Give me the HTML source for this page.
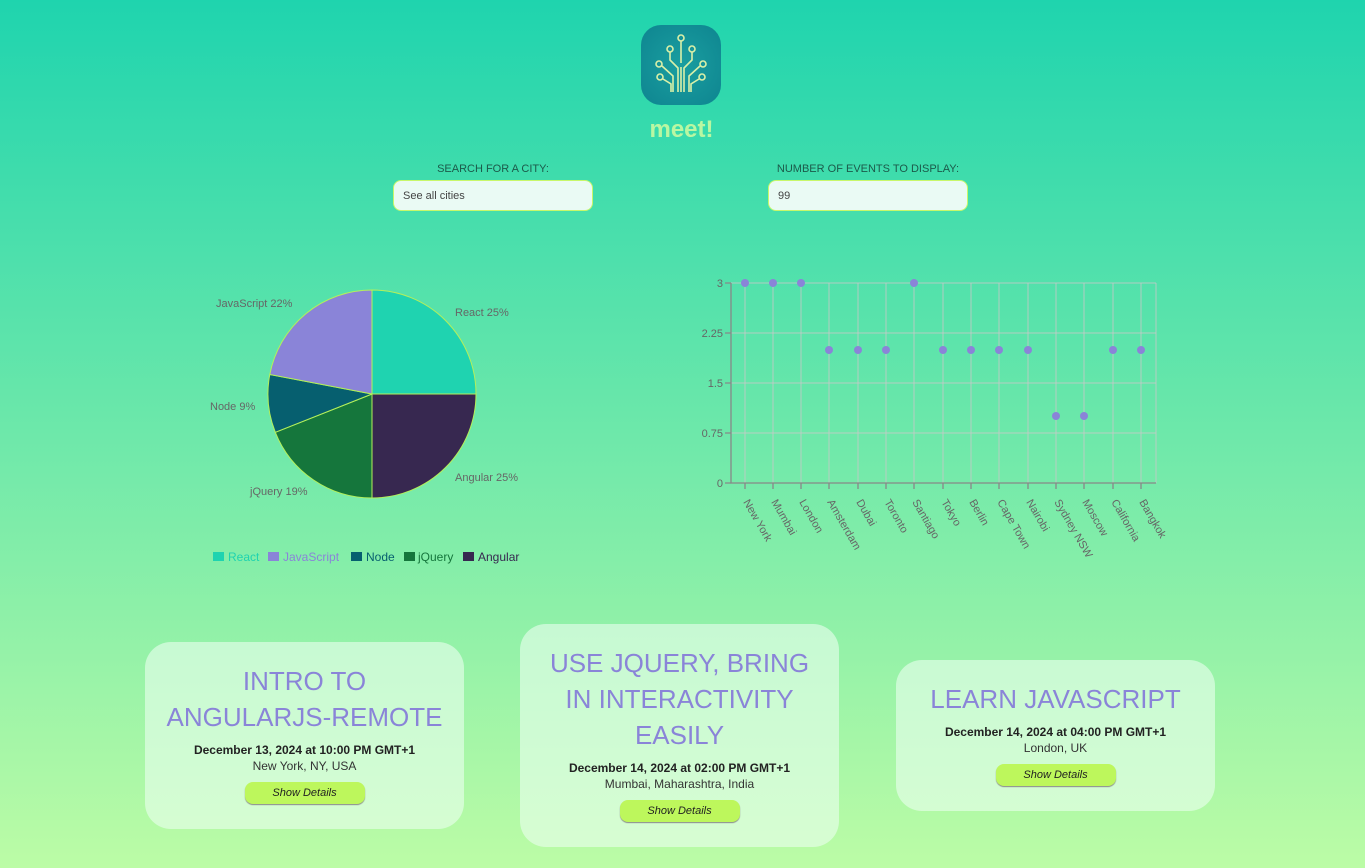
<!DOCTYPE html>
<html><head><meta charset="utf-8"><style>
*{margin:0;padding:0;box-sizing:border-box}
body{width:1365px;height:868px;overflow:hidden;font-family:"Liberation Sans",sans-serif;background:linear-gradient(#1fd4ae,#bcfca6);position:relative}
.abs{position:absolute}
.lbl{font-size:11px;color:#1c5a4a;text-align:center;width:200px}
.inp{width:200px;height:31px;border:1.5px solid #c8f76a;border-radius:8px;background:#eafaf4;font-size:11px;color:#444;padding:9px 9px;}
.card{position:absolute;width:319px;border-radius:26px;background:rgba(235,255,240,0.6);text-align:center;padding:21px 10px 25px}
.card h2{font-weight:normal;font-size:26px;line-height:36px;color:#8a84d8;letter-spacing:0}
.card .d{font-weight:bold;font-size:12px;line-height:16px;color:#222;margin-top:7px}
.card .l{font-size:12px;line-height:16px;color:#333}
.card .b{display:inline-block;width:120px;height:22px;margin-top:8px;border-radius:8px;background:#bdf75c;box-shadow:0 1px 1px #888;font-size:11px;font-style:italic;line-height:22px;color:#222}
</style></head><body>
<div class="abs" style="left:641px;top:25px;width:80px;height:80px;border-radius:20px;background:radial-gradient(circle,#1a9ea0,#0e8590)">
<svg width="80" height="80" viewBox="0 0 80 80" fill="none" stroke="#d9f0a8" stroke-width="1.6">
<circle cx="40" cy="13" r="3"/><circle cx="29" cy="24" r="3"/><circle cx="51" cy="24" r="3"/><circle cx="18" cy="39" r="3"/><circle cx="62" cy="39" r="3"/><circle cx="19" cy="52" r="3"/><circle cx="61" cy="52" r="3"/>
<path d="M40 16V38M29 27v8l8 8v24M51 27v8l-8 8v24M21 41l11 10v16M59 41l-11 10v16M22 54l8 5v8M58 54l-8 5v8M40 42v25"/>
</svg></div>
<div class="abs" style="left:600px;top:116px;width:163px;text-align:center;font-size:24px;font-weight:bold;color:#b9f7a2">meet!</div>
<div class="abs lbl" style="left:393px;top:163px">SEARCH FOR A CITY:</div>
<div class="abs inp" style="left:393px;top:180px">See all cities</div>
<div class="abs lbl" style="left:768px;top:163px">NUMBER OF EVENTS TO DISPLAY:</div>
<div class="abs inp" style="left:768px;top:180px">99</div>
<svg class="abs" style="left:0;top:0" width="1365" height="620" font-family="Liberation Sans, sans-serif" font-size="11">
<g stroke="#b4f05a" stroke-width="1">
<path d="M372 394L372 290A104 104 0 0 1 476 394Z" fill="#1fd3b0"/>
<path d="M372 394L476 394A104 104 0 0 1 372 498Z" fill="#372850"/>
<path d="M372 394L372 498A104 104 0 0 1 275.3 432.3Z" fill="#15763c"/>
<path d="M372 394L275.3 432.3A104 104 0 0 1 269.8 374.5Z" fill="#065f6f"/>
<path d="M372 394L269.8 374.5A104 104 0 0 1 372 290Z" fill="#8a84d8"/>
</g>
<g fill="#666">
<text x="455" y="316">React 25%</text><text x="455" y="481">Angular 25%</text>
<text x="250" y="495">jQuery 19%</text><text x="210" y="410">Node 9%</text><text x="216" y="307">JavaScript 22%</text>
</g>
<g font-size="12">
<rect x="213" y="552" width="11" height="9" fill="#1fd3b0"/><text x="228" y="561" fill="#1fd3b0">React</text>
<rect x="268" y="552" width="11" height="9" fill="#8a84d8"/><text x="283" y="561" fill="#8a84d8">JavaScript</text>
<rect x="351" y="552" width="11" height="9" fill="#065f6f"/><text x="366" y="561" fill="#065f6f">Node</text>
<rect x="404" y="552" width="11" height="9" fill="#15763c"/><text x="418" y="561" fill="#15763c">jQuery</text>
<rect x="463" y="552" width="11" height="9" fill="#372850"/><text x="478" y="561" fill="#372850">Angular</text>
</g>
<g stroke="#c8c8c8" stroke-opacity="0.8" stroke-width="1" fill="none">
<path d="M731 283H1156M731 333H1156M731 383H1156M731 433H1156"/>
<path d="M745 283V483M773 283V483M801 283V483M829 283V483M858 283V483M886 283V483M914 283V483M943 283V483M971 283V483M999 283V483M1028 283V483M1056 283V483M1084 283V483M1113 283V483M1141 283V483M1156 283V483"/>
</g>
<g stroke="#888" stroke-width="1.3" fill="none"><path d="M731 283V483H1156"/><path d="M725 283h6M725 333h6M725 383h6M725 433h6M725 483h6M745 483v6M773 483v6M801 483v6M829 483v6M858 483v6M886 483v6M914 483v6M943 483v6M971 483v6M999 483v6M1028 483v6M1056 483v6M1084 483v6M1113 483v6M1141 483v6"/></g>
<g fill="#666" text-anchor="end"><text x="723" y="287">3</text><text x="723" y="337">2.25</text><text x="723" y="387">1.5</text><text x="723" y="437">0.75</text><text x="723" y="487">0</text></g>
<g fill="#8a84d8">
<circle cx="745" cy="283" r="4"/><circle cx="773" cy="283" r="4"/><circle cx="801" cy="283" r="4"/><circle cx="829" cy="350" r="4"/><circle cx="858" cy="350" r="4"/><circle cx="886" cy="350" r="4"/><circle cx="914" cy="283" r="4"/><circle cx="943" cy="350" r="4"/><circle cx="971" cy="350" r="4"/><circle cx="999" cy="350" r="4"/><circle cx="1028" cy="350" r="4"/><circle cx="1056" cy="416" r="4"/><circle cx="1084" cy="416" r="4"/><circle cx="1113" cy="350" r="4"/><circle cx="1141" cy="350" r="4"/>
</g>
<g fill="#666">
<text transform="translate(743,502) rotate(60)">New York</text>
<text transform="translate(771,502) rotate(60)">Mumbai</text>
<text transform="translate(799,502) rotate(60)">London</text>
<text transform="translate(827,502) rotate(60)">Amsterdam</text>
<text transform="translate(856,502) rotate(60)">Dubai</text>
<text transform="translate(884,502) rotate(60)">Toronto</text>
<text transform="translate(912,502) rotate(60)">Santiago</text>
<text transform="translate(941,502) rotate(60)">Tokyo</text>
<text transform="translate(969,502) rotate(60)">Berlin</text>
<text transform="translate(997,502) rotate(60)">Cape Town</text>
<text transform="translate(1026,502) rotate(60)">Nairobi</text>
<text transform="translate(1054,502) rotate(60)">Sydney NSW</text>
<text transform="translate(1082,502) rotate(60)">Moscow</text>
<text transform="translate(1111,502) rotate(60)">California</text>
<text transform="translate(1139,502) rotate(60)">Bangkok</text>
</g>
</svg>
<div class="card" style="left:145px;top:642px"><h2>INTRO TO<br>ANGULARJS-REMOTE</h2><div class="d">December 13, 2024 at 10:00 PM GMT+1</div><div class="l">New York, NY, USA</div><span class="b">Show Details</span></div>
<div class="card" style="left:520px;top:624px"><h2>USE JQUERY, BRING<br>IN INTERACTIVITY<br>EASILY</h2><div class="d">December 14, 2024 at 02:00 PM GMT+1</div><div class="l">Mumbai, Maharashtra, India</div><span class="b">Show Details</span></div>
<div class="card" style="left:896px;top:660px"><h2>LEARN JAVASCRIPT</h2><div class="d">December 14, 2024 at 04:00 PM GMT+1</div><div class="l">London, UK</div><span class="b">Show Details</span></div>
</body></html>
